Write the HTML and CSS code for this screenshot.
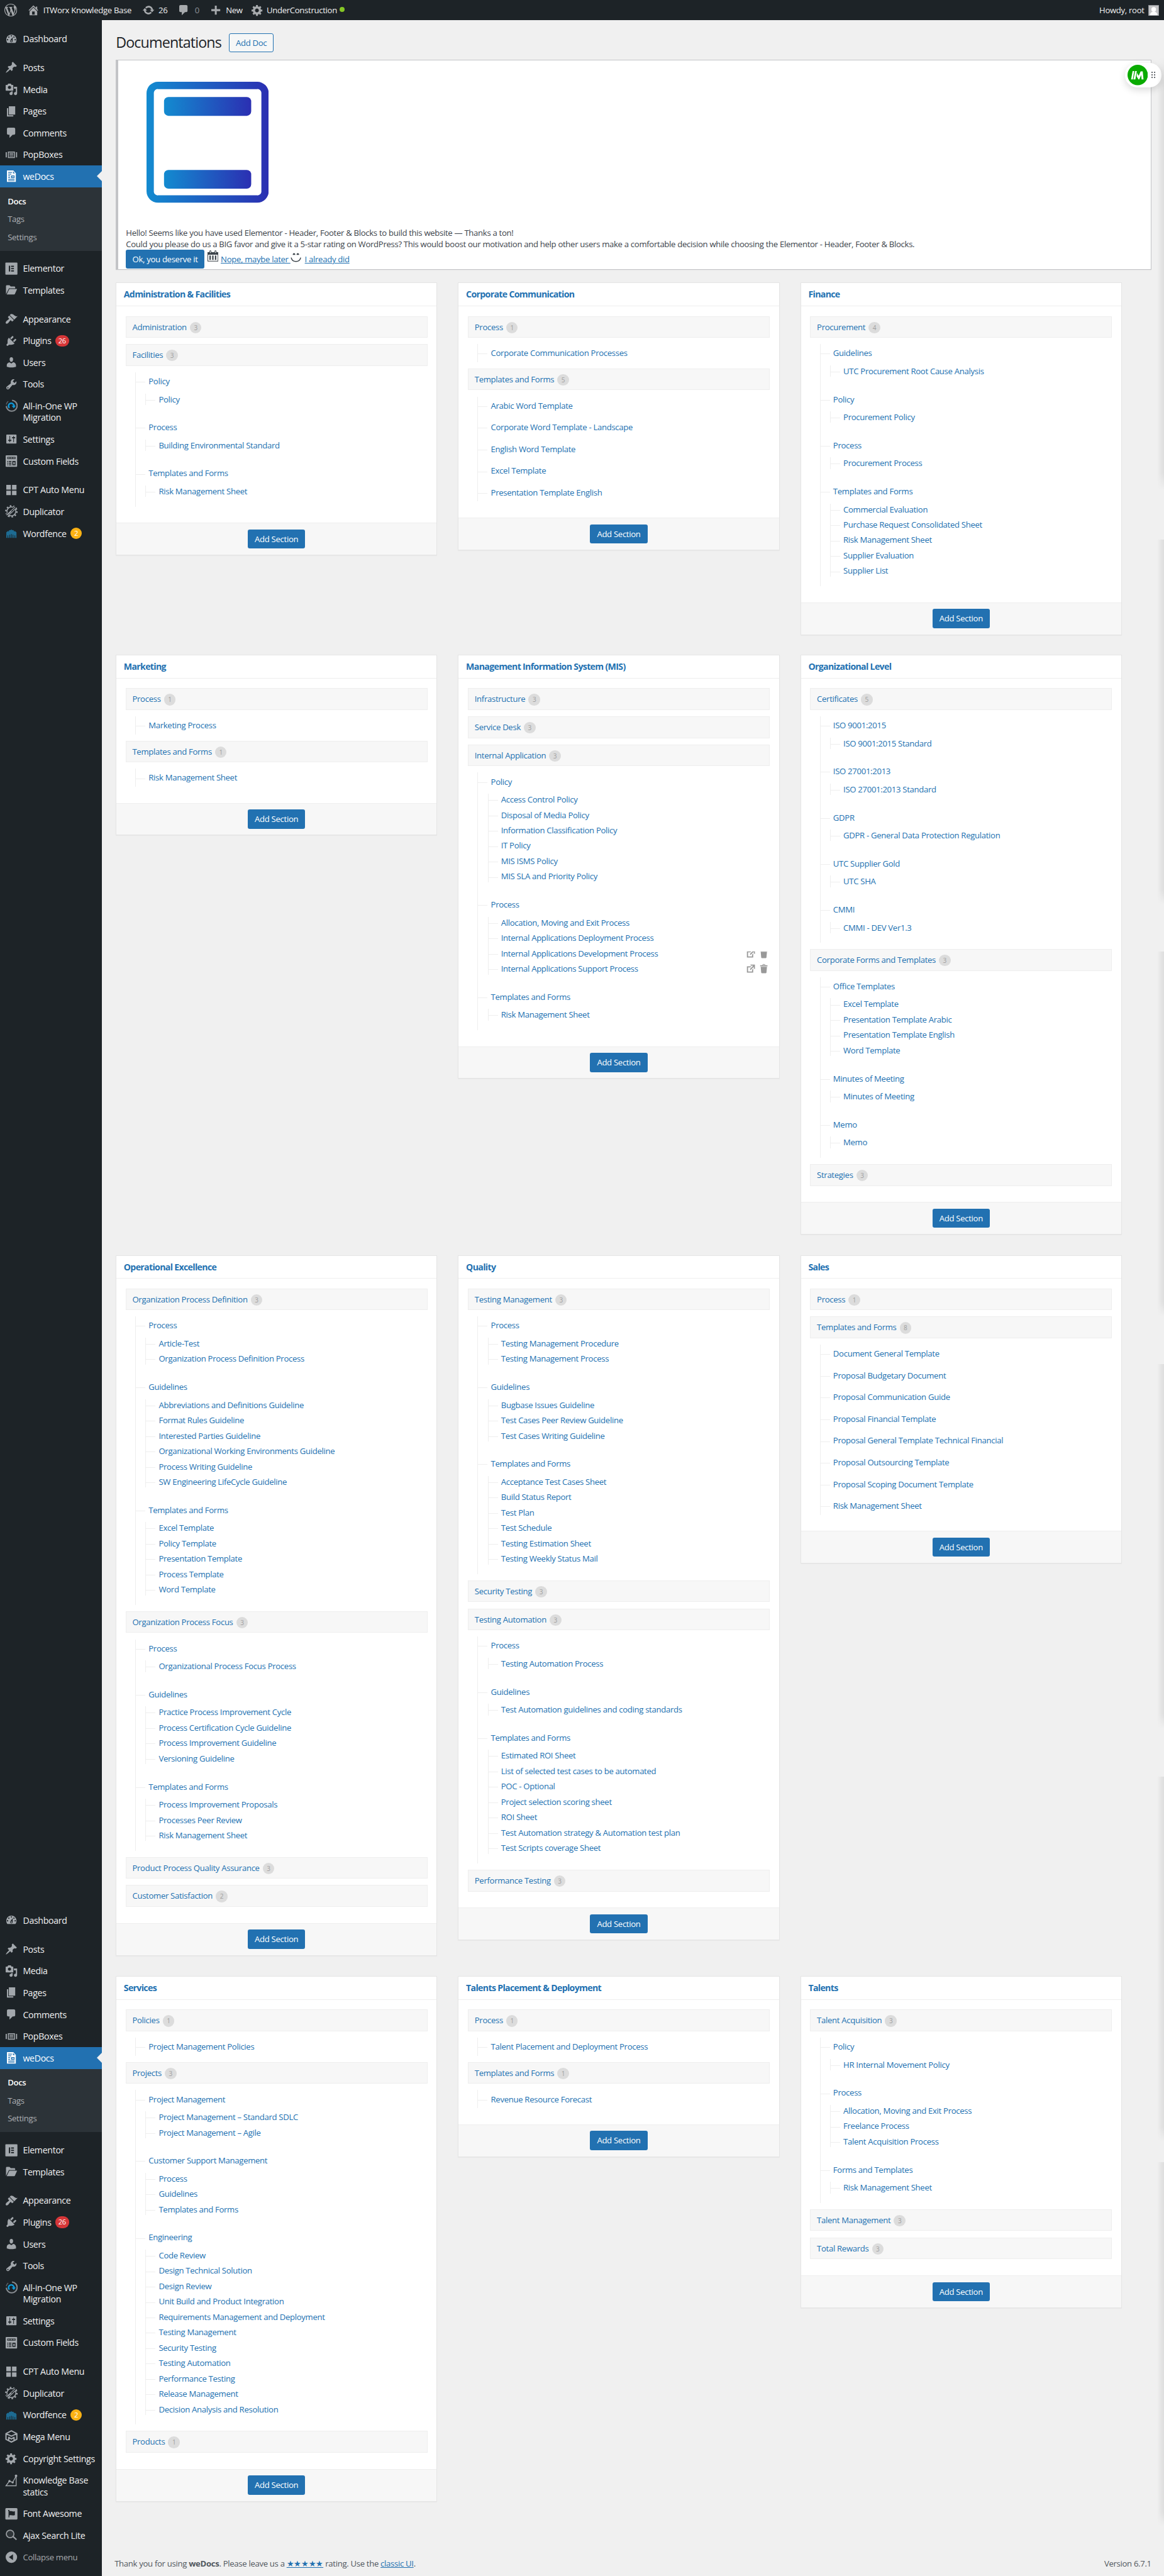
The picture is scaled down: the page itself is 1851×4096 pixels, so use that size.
FILE: index.html
```html
<!DOCTYPE html>
<html lang="en">
<head>
<meta charset="utf-8">
<title>Documentations</title>
<link rel="stylesheet" href="styles.css">
</head>
<body>
<svg class="sprite" width="0" height="0" aria-hidden="true">
  <symbol id="wp" viewBox="0 0 20 20"><path d="M20 10c0-5.51-4.49-10-10-10C4.48 0 0 4.49 0 10c0 5.52 4.48 10 10 10 5.51 0 10-4.48 10-10zM7.78 15.37L4.37 6.22c.55-.02 1.17-.08 1.17-.08.5-.06.44-1.13-.06-1.11 0 0-1.45.11-2.37.11-.18 0-.37 0-.58-.01C4.12 2.69 6.87 1.11 10 1.11c2.33 0 4.45.87 6.05 2.34-.68-.11-1.65.39-1.65 1.58 0 .74.45 1.36.9 2.1.35.61.55 1.36.55 2.46 0 1.49-1.4 5-1.4 5l-3.03-8.37c.54-.02.82-.17.82-.17.5-.05.44-1.25-.06-1.22 0 0-1.44.12-2.38.12-.87 0-2.33-.12-2.33-.12-.5-.03-.56 1.2-.06 1.22l.92.08 1.26 3.41zM17.41 10c.24-.64.74-1.87.43-4.25.7 1.29 1.05 2.71 1.05 4.25 0 3.29-1.73 6.24-4.4 7.78.97-2.59 1.94-5.2 2.92-7.78zM6.1 18.09C3.12 16.65 1.11 13.53 1.11 10c0-1.3.23-2.48.72-3.59C3.25 10.3 4.67 14.2 6.1 18.09zm4.03-6.63l2.58 6.98c-.86.29-1.76.45-2.71.45-.79 0-1.57-.11-2.29-.33.81-2.38 1.62-4.74 2.42-7.1z"/></symbol>
  <symbol id="home" viewBox="0 0 20 20"><path d="M16 8.5l1.53 1.53-1.06 1.06L10 4.6l-6.47 6.49-1.06-1.06L10 2.5l4 4v-2h2v4zm-6-2.46l6 5.99V18H4v-5.97zM12 17v-5H8v5h4z"/></symbol>
  <symbol id="update" viewBox="0 0 20 20"><path d="M10.2 3.28c3.53 0 6.43 2.61 6.92 6h2.08l-3.5 4-3.5-4h2.32c-.45-1.97-2.21-3.45-4.32-3.45-1.45 0-2.73.71-3.54 1.78L4.95 5.66C6.23 4.2 8.11 3.28 10.2 3.28zm-.4 13.44c-3.52 0-6.43-2.61-6.92-6H.8l3.5-4c1.17 1.33 2.33 2.67 3.5 4H5.48c.45 1.97 2.21 3.45 4.32 3.45 1.45 0 2.73-.71 3.54-1.78l1.71 1.95c-1.28 1.46-3.15 2.38-5.25 2.38z"/></symbol>
  <symbol id="comment" viewBox="0 0 20 20"><path d="M5 2h9c1.1 0 2 .9 2 2v7c0 1.1-.9 2-2 2h-2l-5 5v-5H5c-1.1 0-2-.9-2-2V4c0-1.1.9-2 2-2z"/></symbol>
  <symbol id="plus" viewBox="0 0 20 20"><path d="M17 8.500v3h-5.500V17h-3v-5.500H3v-3h5.500V3h3v5.500z"/></symbol>
  <symbol id="dashboard" viewBox="0 0 20 20"><path fill-rule="evenodd" d="M3.76 16h12.48c1.1-1.37 1.76-3.11 1.76-5 0-4.42-3.58-8-8-8s-8 3.58-8 8c0 1.89.66 3.63 1.76 5zM10 4c.55 0 1 .45 1 1s-.45 1-1 1-1-.45-1-1 .45-1 1-1zM6 6c.55 0 1 .45 1 1s-.45 1-1 1-1-.45-1-1 .45-1 1-1zm8 0c.55 0 1 .45 1 1s-.45 1-1 1-1-.45-1-1 .45-1 1-1zm-5.370 5.550L12 7v6c0 1.100-.9 2-2 2s-2-.9-2-2c0-.57.24-1.080.63-1.450zM4 10c.55 0 1 .45 1 1s-.45 1-1 1-1-.45-1-1 .45-1 1-1zm12 0c.55 0 1 .45 1 1s-.45 1-1 1-1-.45-1-1 .45-1 1-1zm-5 3c0-.55-.45-1-1-1s-1 .45-1 1 .45 1 1 1 1-.45 1-1z"/></symbol>
  <symbol id="pin" viewBox="0 0 20 20"><path d="M10.44 3.020l1.820-1.820 6.360 6.350-1.830 1.820c-1.050-.68-2.480-.57-3.410.36l-.75.75c-.92.93-1.040 2.350-.35 3.410l-1.830 1.820-2.410-2.410-2.800 2.790c-.42.42-3.380 2.710-3.800 2.290s1.860-3.390 2.280-3.810l2.790-2.790L4.100 9.360l1.830-1.820c1.050.69 2.480.57 3.400-.36l.75-.75c.93-.92 1.050-2.350.36-3.410z"/></symbol>
  <symbol id="media" viewBox="0 0 20 20"><path fill-rule="evenodd" d="M13 11V4c0-.55-.45-1-1-1h-1.670L9 1H5L3.670 3H2c-.55 0-1 .45-1 1v7c0 .55.45 1 1 1h10c.55 0 1-.45 1-1zM7 4.500c1.380 0 2.500 1.120 2.500 2.500S8.380 9.500 7 9.500 4.500 8.380 4.500 7 5.620 4.500 7 4.500zM14 6h5v10.500c0 1.380-1.120 2.500-2.500 2.500S14 17.880 14 16.500s1.120-2.500 2.500-2.500c.17 0 .34.020.5.050V9h-3V6zm-4 8.050V13h2v3.500c0 1.380-1.120 2.500-2.500 2.500S7 17.880 7 16.500 8.120 14 9.500 14c.17 0 .34.020.5.050z"/></symbol>
  <symbol id="page" viewBox="0 0 20 20"><path d="M6 15V2h10v13H6zm-1 1h8v2H3V5h2v11z"/></symbol>
  <symbol id="popbox" viewBox="0 0 20 20"><path fill-rule="evenodd" d="M4.500 5h11v10h-11zM6 6.500v7h8v-7zM7 7.500h6v1.200H7zM7 9.500h6v1.200H7zM7 11.500h6v1.200H7zM1 6h1.800v8H1zM17.200 6H19v8h-1.800z"/></symbol>
  <symbol id="doc" viewBox="0 0 20 20"><path fill-rule="evenodd" d="M3 1h10l4 4.500V19H3zM5 3.500v1.200h6V3.500zM5 6.300v1.200h5V6.300zM5 9v1.200h3V9zM5 11.700v1.200h3v-1.200zM5 14.300v1.200h10v-1.200zM5 16.600v1h10v-1zM9.500 9v4H15V9zM11 10.300h3v1.400h-3zM12.500 2.300v3.400h3z"/></symbol>
  <symbol id="elementor" viewBox="0 0 20 20"><path fill-rule="evenodd" d="M1.500.5h17a1 1 0 0 1 1 1v17a1 1 0 0 1-1 1h-17a1 1 0 0 1-1-1v-17a1 1 0 0 1 1-1zM6 5.500v9h2v-9zM9.500 5.500v1.800H14V5.500zM9.500 9.100v1.800H14V9.100zM9.500 12.700v1.800H14v-1.800z"/></symbol>
  <symbol id="folder" viewBox="0 0 20 20"><path d="M1.500 16.500V4c0-.8.6-1.500 1.400-1.500H7l2 2h5.500c.8 0 1.500.6 1.500 1.500v1.500H6.200L3 13.800zM2.600 17L6.800 8.500H19L15.600 16c-.3.600-.7 1-1.400 1z"/></symbol>
  <symbol id="brush" viewBox="0 0 20 20"><path d="M14.480 11.060L7.410 3.990l1.500-1.500c.5-.56 2.300-.47 3.510.32 1.210.8 1.430 1.280 2.910 2.100 1.180.64 2.450 1.260 4.450.85zm-.71.71L6.700 4.700 4.930 6.470c-.39.39-.39 1.020 0 1.410l1.060 1.060c.39.39.39 1.030 0 1.420-.6.6-1.430 1.110-2.210 1.690-.35.26-.7.53-1.010.84C1.430 14.230.4 16.080 1.400 17.070c.99 1 2.840-.03 4.180-1.360.31-.31.58-.66.85-1.020.57-.78 1.080-1.610 1.690-2.210.39-.39 1.020-.39 1.410 0l1.060 1.060c.39.39 1.020.39 1.410 0z"/></symbol>
  <symbol id="plug" viewBox="0 0 20 20"><path d="M13.110 4.360L9.870 7.600 8 5.730l3.240-3.240c.35-.34 1.050-.2 1.560.32.52.51.66 1.210.31 1.550zm-8 1.770l.91-1.120 9.010 9.010-1.190.84c-.71.71-2.630 1.160-3.820 1.160H6.140L4.900 17.260c-.59.59-1.540.59-2.120 0-.59-.58-.59-1.530 0-2.120l1.240-1.240v-3.880c0-1.130.4-3.190 1.090-3.890zm7.260 3.970l3.240-3.240c.34-.35 1.040-.21 1.550.31.52.51.66 1.210.31 1.550l-3.240 3.250z"/></symbol>
  <symbol id="user" viewBox="0 0 20 20"><path d="M10 9.250c-2.270 0-2.730-3.440-2.730-3.440C7 4.020 7.820 2 9.970 2c2.160 0 2.980 2.020 2.710 3.810 0 0-.41 3.440-2.680 3.440zm0 2.570L12.720 10c2.390 0 4.520 2.330 4.520 4.530v2.490s-3.650 1.130-7.240 1.130c-3.650 0-7.240-1.130-7.240-1.130v-2.490c0-2.250 1.940-4.480 4.470-4.480z"/></symbol>
  <symbol id="wrench" viewBox="0 0 20 20"><path fill-rule="evenodd" d="M16.680 9.770c-1.340 1.340-3.300 1.670-4.950.99l-5.410 6.520c-.99.99-2.590.99-3.580 0s-.99-2.590 0-3.570l6.520-5.420c-.68-1.650-.35-3.610.99-4.950 1.280-1.280 3.120-1.620 4.720-1.060l-2.890 2.890 2.820 2.820 2.860-2.870c.53 1.580.18 3.390-1.080 4.650zM3.810 16.210c.4.39 1.040.39 1.430 0 .4-.4.4-1.040 0-1.430-.39-.4-1.030-.4-1.430 0-.39.39-.39 1.030 0 1.430z"/></symbol>
  <symbol id="migrate" viewBox="0 0 20 20"><g fill="none"><path d="M11 1.500a8.500 8.500 0 1 1-9 9" stroke="#868b90" stroke-width="2"/><path d="M2 8a8.500 8.500 0 0 1 3-5" stroke="#5c6268" stroke-width="1.500"/><path d="M6.800 13.500a4.300 4.300 0 1 1 7.200-2.500" stroke="#0f9bdc" stroke-width="2.400"/></g><path d="M10.500 10.200h6.500l-3.200 3.800z" fill="#0f9bdc"/></symbol>
  <symbol id="sliders" viewBox="0 0 20 20"><path fill-rule="evenodd" d="M18 16V4c0-.55-.45-1-1-1H3c-.55 0-1 .45-1 1v12c0 .55.45 1 1 1h14c.55 0 1-.45 1-1zM8 11h1c.55 0 1 .45 1 1s-.45 1-1 1H8v1.500c0 .28-.22.5-.5.5s-.5-.22-.5-.5V13H6c-.55 0-1-.45-1-1s.45-1 1-1h1V5.500c0-.28.22-.5.5-.5s.5.22.5.5V11zm5-2h-1c-.55 0-1-.45-1-1s.45-1 1-1h1V5.500c0-.28.22-.5.5-.5s.5.22.5.5V7h1c.55 0 1 .45 1 1s-.45 1-1 1h-1v5.500c0 .28-.22.5-.5.5s-.5-.22-.5-.5V9z"/></symbol>
  <symbol id="fields" viewBox="0 0 20 20"><path fill-rule="evenodd" d="M2 1h16a1 1 0 0 1 1 1v16a1 1 0 0 1-1 1H2a1 1 0 0 1-1-1V2a1 1 0 0 1 1-1zM3.500 3.500v3.200h13V3.500zM3.500 10v1.300H5V10zM6 10v1.300h4V10zM3.500 12.700V14H5v-1.300zM6 12.700V14h4v-1.300zM3.500 15.300v1.300H5v-1.300zM6 15.300v1.300h4v-1.300zM11.500 10v6.500h5V10zM13 11.500h2.200V15H13zM4.500 4.500h2.800v1.200H4.500zM8.500 4.500h2.900v1.200H8.500zM12.600 4.500h2.800v1.200h-2.800z"/></symbol>
  <symbol id="grid" viewBox="0 0 20 20"><path d="M2 2h7.200v7.300H2zM11 2h7v7.300h-7zM2 11h7.200v7H2zM11 11h7v7h-7z"/></symbol>
  <symbol id="duplicator" viewBox="0 0 20 20"><g fill="none" stroke="currentColor"><circle cx="10" cy="10" r="7" stroke-width="1.500"/><circle cx="10" cy="10" r="8.700" stroke-width="2.200" stroke-dasharray="2.400 3.066"/></g><path d="M1.500 17.500L17.500 2.300" stroke="#1d2327" stroke-width="4.500"/><path d="M2 16L16 3M4 18L18.500 4M4 15.500L10 10M10.500 12L15 7" stroke="currentColor" stroke-width="1.100"/></symbol>
  <symbol id="fence" viewBox="0 0 20 20"><path fill="#1d6b92" d="M2 8.500L4.200 6.500 6 7V5.500L8 4.600 9 5l1-1.500L11 5l1-.4 2 .9V7l1.800-.5L18 8.500V17h-2v-4h-1v4h-2v-5h-1v5h-1.500v-6h-1v6H8v-5H7v5H5v-4H4v4H2z"/></symbol>
  <symbol id="mega" viewBox="0 0 20 20"><path fill="none" stroke="currentColor" stroke-width="2" stroke-linejoin="round" d="M10 1.200L18.500 5.500v9L10 18.800 1.500 14.500v-9zM1.500 5.500L10 9.500l8.500-4M5.800 15.500v-4L10 14l4.200-2.500v4"/></symbol>
  <symbol id="gear" viewBox="0 0 20 20"><path fill-rule="evenodd" d="M18 12h-2.180c-.17.7-.44 1.350-.81 1.930l1.540 1.540-2.100 2.100-1.540-1.540c-.58.36-1.230.63-1.910.79V19H8v-2.180c-.68-.16-1.330-.43-1.910-.79l-1.540 1.540-2.120-2.120 1.540-1.540c-.36-.58-.63-1.230-.79-1.910H1V9.030h2.170c.16-.7.44-1.350.8-1.940L2.430 5.550l2.100-2.100 1.540 1.540c.58-.37 1.240-.64 1.930-.81V2h3v2.180c.68.16 1.330.43 1.910.79l1.540-1.540 2.120 2.120-1.540 1.540c.36.59.64 1.240.8 1.940H18V12zm-8.500 1.500c1.660 0 3-1.340 3-3s-1.340-3-3-3-3 1.340-3 3 1.340 3 3 3z"/></symbol>
  <symbol id="chart" viewBox="0 0 20 20"><path fill="none" stroke="currentColor" stroke-width="1.300" d="M1.500 18.300L7 11l5 2 5.500-10v15.300z"/><circle cx="7" cy="11" r="1.800"/><circle cx="12" cy="13" r="1.600"/><circle cx="17.300" cy="2.800" r="2"/></symbol>
  <symbol id="flag" viewBox="0 0 20 20"><path fill-rule="evenodd" d="M2 1h16a1.500 1.500 0 0 1 1.500 1.500v15A1.500 1.500 0 0 1 18 19H2a1.500 1.500 0 0 1-1.500-1.500v-15A1.500 1.500 0 0 1 2 1zM5 4v1.500l.5.5v9.500h1.300v-3c3-1.300 5 1 8.700-.3V6c-3.700 1.200-5.500-1-8.500 0V4z"/></symbol>
  <symbol id="search" viewBox="0 0 20 20"><circle cx="8" cy="8" r="6" fill="#2f3539" stroke="#9a9ea2" stroke-width="1.700"/><path d="M12.500 12L18 17" stroke="#9a9ea2" stroke-width="2.200"/></symbol>
  <symbol id="collapse" viewBox="0 0 20 20"><path fill-rule="evenodd" d="M10 1a9 9 0 1 1 0 18 9 9 0 0 1 0-18zM12.500 5.500L6 10l6.500 4.500z"/></symbol>
  <symbol id="external" viewBox="0 0 20 20"><path d="M9 3h8v8l-2-1V6.920l-5.600 5.590-1.410-1.410L14.080 5H10zm3 12v-3l2-2v7H3V6h8L9 8H5v7h7z"/></symbol>
  <symbol id="trash" viewBox="0 0 20 20"><path d="M12 4h3c.6 0 1 .4 1 1v1H3V5c0-.6.500-1 1-1h3c.2-1.100 1.300-2 2.500-2s2.300.9 2.500 2zM8 4h3c-.2-.6-.9-1-1.500-1S8.200 3.400 8 4zM4 7h11l-.9 10.100c0 .5-.5.9-1 .9H5.900c-.5 0-.9-.4-1-.9z"/></symbol>
</svg>

<header class="bar">
  <span class="bar-item w-logo"><svg class="ico"><use href="#wp"/></svg></span>
  <span class="bar-item w-site"><svg class="ico"><use href="#home"/></svg>ITWorx Knowledge Base</span>
  <span class="bar-item w-upd"><svg class="ico"><use href="#update"/></svg>26</span>
  <span class="bar-item w-com dim"><svg class="ico"><use href="#comment"/></svg>0</span>
  <span class="bar-item w-new"><svg class="ico"><use href="#plus"/></svg>New</span>
  <span class="bar-item w-uc"><svg class="ico"><use href="#gear"/></svg>UnderConstruction<i class="dot"></i></span>
  <span class="bar-user">Howdy, root<svg class="avatar" viewBox="0 0 17 17"><path fill="#c3c4c6" d="M0 0h17v17H0z"/><circle cx="8.500" cy="7" r="3.700" fill="#fff"/><path fill="#fff" d="M2.300 17c.5-4.500 3-6.800 6.200-6.800s5.700 2.300 6.200 6.800z"/><path fill="none" stroke="#8c8f94" d="M.5.5h16v16H.5z"/></svg></span>
</header>

<div class="shell">
<nav class="side">
  <ul class="menu menu-top">
    <li><svg class="ico"><use href="#dashboard"/></svg><span>Dashboard</span></li>
    <li class="gap"><svg class="ico"><use href="#pin"/></svg><span>Posts</span></li>
    <li><svg class="ico"><use href="#media"/></svg><span>Media</span></li>
    <li><svg class="ico"><use href="#page"/></svg><span>Pages</span></li>
    <li><svg class="ico"><use href="#comment"/></svg><span>Comments</span></li>
    <li><svg class="ico"><use href="#popbox"/></svg><span>PopBoxes</span></li>
    <li class="on"><svg class="ico"><use href="#doc"/></svg><span>weDocs</span></li>
    <li class="sub"><b>Docs</b><span>Tags</span><span>Settings</span></li>
    <li class="gap"><svg class="ico"><use href="#elementor"/></svg><span>Elementor</span></li>
    <li><svg class="ico"><use href="#folder"/></svg><span>Templates</span></li>
    <li class="gap"><svg class="ico"><use href="#brush"/></svg><span>Appearance</span></li>
    <li><svg class="ico"><use href="#plug"/></svg><span>Plugins</span><em class="red">26</em></li>
    <li><svg class="ico"><use href="#user"/></svg><span>Users</span></li>
    <li><svg class="ico"><use href="#wrench"/></svg><span>Tools</span></li>
    <li><svg class="ico"><use href="#migrate"/></svg><span>All-in-One WP<br>Migration</span></li>
    <li><svg class="ico"><use href="#sliders"/></svg><span>Settings</span></li>
    <li><svg class="ico"><use href="#fields"/></svg><span>Custom Fields</span></li>
    <li class="gap"><svg class="ico"><use href="#grid"/></svg><span>CPT Auto Menu</span></li>
    <li><svg class="ico"><use href="#duplicator"/></svg><span>Duplicator</span></li>
    <li><svg class="ico"><use href="#fence"/></svg><span>Wordfence</span><em>2</em></li>
  </ul>
  <ul class="menu">
    <li><svg class="ico"><use href="#dashboard"/></svg><span>Dashboard</span></li>
    <li class="gap"><svg class="ico"><use href="#pin"/></svg><span>Posts</span></li>
    <li><svg class="ico"><use href="#media"/></svg><span>Media</span></li>
    <li><svg class="ico"><use href="#page"/></svg><span>Pages</span></li>
    <li><svg class="ico"><use href="#comment"/></svg><span>Comments</span></li>
    <li><svg class="ico"><use href="#popbox"/></svg><span>PopBoxes</span></li>
    <li class="on"><svg class="ico"><use href="#doc"/></svg><span>weDocs</span></li>
    <li class="sub"><b>Docs</b><span>Tags</span><span>Settings</span></li>
    <li class="gap"><svg class="ico"><use href="#elementor"/></svg><span>Elementor</span></li>
    <li><svg class="ico"><use href="#folder"/></svg><span>Templates</span></li>
    <li class="gap"><svg class="ico"><use href="#brush"/></svg><span>Appearance</span></li>
    <li><svg class="ico"><use href="#plug"/></svg><span>Plugins</span><em class="red">26</em></li>
    <li><svg class="ico"><use href="#user"/></svg><span>Users</span></li>
    <li><svg class="ico"><use href="#wrench"/></svg><span>Tools</span></li>
    <li><svg class="ico"><use href="#migrate"/></svg><span>All-in-One WP<br>Migration</span></li>
    <li><svg class="ico"><use href="#sliders"/></svg><span>Settings</span></li>
    <li><svg class="ico"><use href="#fields"/></svg><span>Custom Fields</span></li>
    <li class="gap"><svg class="ico"><use href="#grid"/></svg><span>CPT Auto Menu</span></li>
    <li><svg class="ico"><use href="#duplicator"/></svg><span>Duplicator</span></li>
    <li><svg class="ico"><use href="#fence"/></svg><span>Wordfence</span><em>2</em></li>
    <li><svg class="ico"><use href="#mega"/></svg><span>Mega Menu</span></li>
    <li><svg class="ico"><use href="#gear"/></svg><span>Copyright Settings</span></li>
    <li><svg class="ico"><use href="#chart"/></svg><span>Knowledge Base<br>statics</span></li>
    <li><svg class="ico"><use href="#flag"/></svg><span>Font Awesome</span></li>
    <li><svg class="ico"><use href="#search"/></svg><span>Ajax Search Lite</span></li>
    <li class="fold"><svg class="ico"><use href="#collapse"/></svg><span>Collapse menu</span></li>
  </ul>
</nav>

<main class="main">
  <div class="head"><h1>Documentations</h1><a class="add-doc">Add Doc</a></div>

  <section class="notice">
    <svg class="logo" viewBox="0 0 192 190">
      <defs><linearGradient id="blue"><stop offset="0" stop-color="#138bd0"/><stop offset="1" stop-color="#2b2fb2"/></linearGradient></defs>
      <path fill="url(#blue)" fill-rule="evenodd" d="M18 0h156a18 18 0 0 1 18 18v154a18 18 0 0 1-18 18H18a18 18 0 0 1-18-18V18A18 18 0 0 1 18 0zM18 11.500a6 6 0 0 0-6.500 6.500v154a6 6 0 0 0 6.500 6.500h156a6 6 0 0 0 6.500-6.500V18a6 6 0 0 0-6.500-6.500z"/>
      <rect x="27.500" y="24" width="137" height="29.500" rx="7" fill="url(#blue)"/>
      <rect x="27.500" y="138.500" width="137" height="29.500" rx="7" fill="url(#blue)"/>
    </svg>
    <p>Hello! Seems like you have used Elementor - Header, Footer &amp; Blocks to build this website — Thanks a ton!<br>Could you please do us a BIG favor and give it a 5-star rating on WordPress? This would boost our motivation and help other users make a comfortable decision while choosing the Elementor - Header, Footer &amp; Blocks.</p>
    <div class="actions">
      <a class="btn ok">Ok, you deserve it</a>
      <svg class="cal" viewBox="0 0 17 18"><path fill-rule="evenodd" d="M0 3h3V1.500a1.500 1.500 0 0 1 3 0V3h5V1.500a1.500 1.500 0 0 1 3 0V3h3v14.500H0zM1 7v9.500h15V7zM4 1.300v3h1v-3zM12 1.300v3h1v-3zM3 8.200h2.200v7H3zM7.300 8.200h2.200v7H7.300zM11.600 8.200h2.200v7h-2.200z"/></svg>
      <a class="link later">Nope, maybe later&nbsp;</a>
      <svg class="smile" viewBox="0 0 17 15"><path d="M3.500 3.300C3.500 1.300 4.300.5 5.500.5s2 .8 2 2.800zM9.500 3.300c0-2 .8-2.800 2-2.800s2 .8 2 2.800z"/><path fill="none" stroke="currentColor" stroke-width="1.500" d="M1 7.500C3 15.700 14 15.700 16 7.500"/></svg>
      <a class="link">I already did</a>
    </div>
  </section>

  <div class="docs">
    <article class="card">
      <h3>Administration &amp; Facilities</h3>
      <div class="body">
        <div class="sec">Administration<i>3</i></div>
        <div class="sec">Facilities<i>3</i></div>
        <ul class="tree">
          <li>Policy<ul><li>Policy</li></ul></li>
          <li>Process<ul><li>Building Environmental Standard</li></ul></li>
          <li>Templates and Forms<ul><li>Risk Management Sheet</li></ul></li>
        </ul>
      </div>
      <footer><a class="btn">Add Section</a></footer>
    </article>

    <article class="card">
      <h3>Corporate Communication</h3>
      <div class="body">
        <div class="sec">Process<i>1</i></div>
        <ul class="tree"><li>Corporate Communication Processes</li></ul>
        <div class="sec">Templates and Forms<i>5</i></div>
        <ul class="tree">
          <li>Arabic Word Template</li>
          <li>Corporate Word Template - Landscape</li>
          <li>English Word Template</li>
          <li>Excel Template</li>
          <li>Presentation Template English</li>
        </ul>
      </div>
      <footer><a class="btn">Add Section</a></footer>
    </article>

    <article class="card">
      <h3>Finance</h3>
      <div class="body">
        <div class="sec">Procurement<i>4</i></div>
        <ul class="tree">
          <li>Guidelines<ul><li>UTC Procurement Root Cause Analysis</li></ul></li>
          <li>Policy<ul><li>Procurement Policy</li></ul></li>
          <li>Process<ul><li>Procurement Process</li></ul></li>
          <li>Templates and Forms<ul>
            <li>Commercial Evaluation</li>
            <li>Purchase Request Consolidated Sheet</li>
            <li>Risk Management Sheet</li>
            <li>Supplier Evaluation</li>
            <li>Supplier List</li></ul></li>
        </ul>
      </div>
      <footer><a class="btn">Add Section</a></footer>
    </article>

    <article class="card">
      <h3>Marketing</h3>
      <div class="body">
        <div class="sec">Process<i>1</i></div>
        <ul class="tree"><li>Marketing Process</li></ul>
        <div class="sec">Templates and Forms<i>1</i></div>
        <ul class="tree"><li>Risk Management Sheet</li></ul>
      </div>
      <footer><a class="btn">Add Section</a></footer>
    </article>

    <article class="card">
      <h3>Management Information System (MIS)</h3>
      <div class="body">
        <div class="sec">Infrastructure<i>3</i></div>
        <div class="sec">Service Desk<i>3</i></div>
        <div class="sec">Internal Application<i>3</i></div>
        <ul class="tree">
          <li>Policy<ul>
            <li>Access Control Policy</li>
            <li>Disposal of Media Policy</li>
            <li>Information Classification Policy</li>
            <li>IT Policy</li>
            <li>MIS ISMS Policy</li>
            <li>MIS SLA and Priority Policy</li></ul></li>
          <li>Process<ul>
            <li>Allocation, Moving and Exit Process</li>
            <li>Internal Applications Deployment Process</li>
            <li class="tools">Internal Applications Development Process<span class="acts cut"><svg><use href="#external"/></svg><svg><use href="#trash"/></svg></span></li>
            <li class="tools">Internal Applications Support Process<span class="acts"><svg><use href="#external"/></svg><svg><use href="#trash"/></svg></span></li></ul></li>
          <li>Templates and Forms<ul><li>Risk Management Sheet</li></ul></li>
        </ul>
      </div>
      <footer><a class="btn">Add Section</a></footer>
    </article>

    <article class="card">
      <h3>Organizational Level</h3>
      <div class="body">
        <div class="sec">Certificates<i>5</i></div>
        <ul class="tree">
          <li>ISO 9001:2015<ul><li>ISO 9001:2015 Standard</li></ul></li>
          <li>ISO 27001:2013<ul><li>ISO 27001:2013 Standard</li></ul></li>
          <li>GDPR<ul><li>GDPR - General Data Protection Regulation</li></ul></li>
          <li>UTC Supplier Gold<ul><li>UTC SHA</li></ul></li>
          <li>CMMI<ul><li>CMMI - DEV Ver1.3</li></ul></li>
        </ul>
        <div class="sec">Corporate Forms and Templates<i>3</i></div>
        <ul class="tree">
          <li>Office Templates<ul>
            <li>Excel Template</li>
            <li>Presentation Template Arabic</li>
            <li>Presentation Template English</li>
            <li>Word Template</li></ul></li>
          <li>Minutes of Meeting<ul><li>Minutes of Meeting</li></ul></li>
          <li>Memo<ul><li>Memo</li></ul></li>
        </ul>
        <div class="sec">Strategies<i>3</i></div>
      </div>
      <footer><a class="btn">Add Section</a></footer>
    </article>

    <article class="card">
      <h3>Operational Excellence</h3>
      <div class="body">
        <div class="sec">Organization Process Definition<i>3</i></div>
        <ul class="tree">
          <li>Process<ul>
            <li>Article-Test</li>
            <li>Organization Process Definition Process</li></ul></li>
          <li>Guidelines<ul>
            <li>Abbreviations and Definitions Guideline</li>
            <li>Format Rules Guideline</li>
            <li>Interested Parties Guideline</li>
            <li>Organizational Working Environments Guideline</li>
            <li>Process Writing Guideline</li>
            <li>SW Engineering LifeCycle Guideline</li></ul></li>
          <li>Templates and Forms<ul>
            <li>Excel Template</li>
            <li>Policy Template</li>
            <li>Presentation Template</li>
            <li>Process Template</li>
            <li>Word Template</li></ul></li>
        </ul>
        <div class="sec">Organization Process Focus<i>3</i></div>
        <ul class="tree">
          <li>Process<ul><li>Organizational Process Focus Process</li></ul></li>
          <li>Guidelines<ul>
            <li>Practice Process Improvement Cycle</li>
            <li>Process Certification Cycle Guideline</li>
            <li>Process Improvement Guideline</li>
            <li>Versioning Guideline</li></ul></li>
          <li>Templates and Forms<ul>
            <li>Process Improvement Proposals</li>
            <li>Processes Peer Review</li>
            <li>Risk Management Sheet</li></ul></li>
        </ul>
        <div class="sec">Product Process Quality Assurance<i>3</i></div>
        <div class="sec">Customer Satisfaction<i>2</i></div>
      </div>
      <footer><a class="btn">Add Section</a></footer>
    </article>

    <article class="card">
      <h3>Quality</h3>
      <div class="body">
        <div class="sec">Testing Management<i>3</i></div>
        <ul class="tree">
          <li>Process<ul>
            <li>Testing Management Procedure</li>
            <li>Testing Management Process</li></ul></li>
          <li>Guidelines<ul>
            <li>Bugbase Issues Guideline</li>
            <li>Test Cases Peer Review Guideline</li>
            <li>Test Cases Writing Guideline</li></ul></li>
          <li>Templates and Forms<ul>
            <li>Acceptance Test Cases Sheet</li>
            <li>Build Status Report</li>
            <li>Test Plan</li>
            <li>Test Schedule</li>
            <li>Testing Estimation Sheet</li>
            <li>Testing Weekly Status Mail</li></ul></li>
        </ul>
        <div class="sec">Security Testing<i>3</i></div>
        <div class="sec">Testing Automation<i>3</i></div>
        <ul class="tree">
          <li>Process<ul><li>Testing Automation Process</li></ul></li>
          <li>Guidelines<ul><li>Test Automation guidelines and coding standards</li></ul></li>
          <li>Templates and Forms<ul>
            <li>Estimated ROI Sheet</li>
            <li>List of selected test cases to be automated</li>
            <li>POC - Optional</li>
            <li>Project selection scoring sheet</li>
            <li>ROI Sheet</li>
            <li>Test Automation strategy &amp; Automation test plan</li>
            <li>Test Scripts coverage Sheet</li></ul></li>
        </ul>
        <div class="sec">Performance Testing<i>3</i></div>
      </div>
      <footer><a class="btn">Add Section</a></footer>
    </article>

    <article class="card">
      <h3>Sales</h3>
      <div class="body">
        <div class="sec">Process<i>1</i></div>
        <div class="sec">Templates and Forms<i>8</i></div>
        <ul class="tree">
          <li>Document General Template</li>
          <li>Proposal Budgetary Document</li>
          <li>Proposal Communication Guide</li>
          <li>Proposal Financial Template</li>
          <li>Proposal General Template Technical Financial</li>
          <li>Proposal Outsourcing Template</li>
          <li>Proposal Scoping Document Template</li>
          <li>Risk Management Sheet</li>
        </ul>
      </div>
      <footer><a class="btn">Add Section</a></footer>
    </article>

    <article class="card">
      <h3>Services</h3>
      <div class="body">
        <div class="sec">Policies<i>1</i></div>
        <ul class="tree"><li>Project Management Policies</li></ul>
        <div class="sec">Projects<i>3</i></div>
        <ul class="tree">
          <li>Project Management<ul>
            <li>Project Management – Standard SDLC</li>
            <li>Project Management – Agile</li></ul></li>
          <li>Customer Support Management<ul>
            <li>Process</li>
            <li>Guidelines</li>
            <li>Templates and Forms</li></ul></li>
          <li>Engineering<ul>
            <li>Code Review</li>
            <li>Design Technical Solution</li>
            <li>Design Review</li>
            <li>Unit Build and Product Integration</li>
            <li>Requirements Management and Deployment</li>
            <li>Testing Management</li>
            <li>Security Testing</li>
            <li>Testing Automation</li>
            <li>Performance Testing</li>
            <li>Release Management</li>
            <li>Decision Analysis and Resolution</li></ul></li>
        </ul>
        <div class="sec">Products<i>1</i></div>
      </div>
      <footer><a class="btn">Add Section</a></footer>
    </article>

    <article class="card">
      <h3>Talents Placement &amp; Deployment</h3>
      <div class="body">
        <div class="sec">Process<i>1</i></div>
        <ul class="tree"><li>Talent Placement and Deployment Process</li></ul>
        <div class="sec">Templates and Forms<i>1</i></div>
        <ul class="tree"><li>Revenue Resource Forecast</li></ul>
      </div>
      <footer><a class="btn">Add Section</a></footer>
    </article>

    <article class="card">
      <h3>Talents</h3>
      <div class="body">
        <div class="sec">Talent Acquisition<i>3</i></div>
        <ul class="tree">
          <li>Policy<ul><li>HR Internal Movement Policy</li></ul></li>
          <li>Process<ul>
            <li>Allocation, Moving and Exit Process</li>
            <li>Freelance Process</li>
            <li>Talent Acquisition Process</li></ul></li>
          <li>Forms and Templates<ul><li>Risk Management Sheet</li></ul></li>
        </ul>
        <div class="sec">Talent Management<i>3</i></div>
        <div class="sec">Total Rewards<i>3</i></div>
      </div>
      <footer><a class="btn">Add Section</a></footer>
    </article>
  </div>

  <div class="foot">
    <span>Thank you for using <b>weDocs</b>. Please leave us a <a class="link">★★★★★</a> rating. Use the <a class="link">classic UI</a>.</span>
    <span>Version 6.7.1</span>
  </div>
</main>
</div>

<div class="float">
  <svg class="badge" viewBox="0 0 32 32"><circle cx="16" cy="16" r="16" fill="#0aab00"/><path fill="#fff" d="M8 9.800h2.600L8.300 22.900H5.600zM12 9.800h2.600l-2.300 13.100H9.300zM14.700 12.700l2.900 4.600 3-7h3.300l1.200 12.600h-3l-.6-6.800-3 6.800h-1.300l-2.800-4.600z"/></svg>
  <svg class="grip" viewBox="0 0 8 12"><g fill="#4a4f55"><circle cx="2" cy="2" r="1.100"/><circle cx="6" cy="2" r="1.100"/><circle cx="2" cy="6" r="1.100"/><circle cx="6" cy="6" r="1.100"/><circle cx="2" cy="10" r="1.100"/><circle cx="6" cy="10" r="1.100"/></g></svg>
</div>
<div class="edge"><i class="e1"></i><i class="e2"></i><i class="e3"></i><i class="e4"></i><i class="e5"></i><i class="e6"></i></div>
</body>
</html>
```
FILE: styles.css
```css
html { zoom: 1.01195; }
body {
  margin: 0;
  position: relative;
  height: 4047.6px;
  overflow: hidden;
  background: #f0f0f0;
  color: #3c434a;
  font: 13px/1.4 "Open Sans", "Noto Sans", sans-serif;
  letter-spacing: -0.024em;
}
ul { list-style: none; margin: 0; padding: 0; }
.sprite { display: none; }
.ico { width: 20px; height: 20px; fill: currentColor; flex: none; }
.link { color: #2271b1; text-decoration: underline; }

/* top bar */
.bar {
  display: flex;
  height: 32px;
  background: #1d2327;
  color: #f0f0f1;
  font-size: 13px;
}
.bar-item { display: flex; align-items: center; gap: 6px; box-sizing: border-box; white-space: nowrap; }
.bar-item .ico { color: #a7aaad; }
.w-logo { width: 42px; padding-left: 7px; }
.w-site { width: 181px; }
.w-upd { width: 56px; }
.w-com { width: 50px; gap: 7px; }
.w-new { width: 65px; }
.w-uc { gap: 5px; }
.dim { color: #8c9196; }
.dot { width: 8px; height: 8px; border-radius: 50%; background: #85c725; margin: -3px 0 0 -1px; }
.bar-user { display: flex; align-items: center; gap: 6px; margin-left: auto; padding-right: 8px; }
.avatar { width: 17px; height: 17px; }

.shell { display: flex; height: 4015.6px; }

/* side menu */
.side { width: 160px; flex: none; background: #1d2327; }
.menu-top { box-sizing: border-box; height: 2968.500px; padding-top: 12px; }
.menu li { display: flex; padding-left: 8px; color: #f0f0f1; font-size: 14px; line-height: 18.200px; }
.menu li > span { padding: 8.600px 0 7.400px 8px; white-space: nowrap; }
.menu .ico { margin-top: 7px; color: #a2a7ac; }
.menu .gap { margin-top: 11px; }
.menu em {
  margin: 8px 0 0 6px;
  min-width: 18px;
  height: 18px;
  box-sizing: border-box;
  border-radius: 9px;
  background: #fcb214;
  color: #fff;
  font-size: 11px;
  font-style: normal;
  line-height: 17px;
  text-align: center;
}
.menu .red { background: #d63638; padding: 0 5px; }
.menu .on { background: #2271b1; color: #fff; }
.menu .on .ico { color: #fff; }
.menu .on::after {
  content: "";
  align-self: flex-start;
  margin: 9px 0 0 auto;
  border: 8px solid transparent;
  border-left: 0;
  border-right-color: #f0f0f0;
}
.menu .sub {
  flex-direction: column;
  background: #2c3338;
  padding: 7.600px 0 7.400px 12px;
  font-size: 13px;
  color: #adb0b4;
}
.menu .sub > span, .menu .sub > b { padding: 5px 0; }
.menu .sub b { color: #fff; font-weight: 600; }
.menu .fold { color: #a7aaad; font-size: 13px; }

/* content */
.main { flex: 1; padding: 20px 20px 0 22px; min-width: 0; }
.head { display: flex; gap: 10px; height: 42.300px; }
.head h1 {
  margin: 0;
  width: 168px;
  color: #1d2327;
  font-size: 23px;
  font-weight: 400;
  line-height: 29px;
  letter-spacing: -0.037em;
  white-space: nowrap;
}
.add-doc {
  height: 30px;
  width: 70px;
  box-sizing: border-box;
  border: 1px solid #2271b1;
  border-radius: 3px;
  background: #f6f7f7;
  color: #2271b1;
  line-height: 29px;
  text-align: center;
}
.btn {
  display: block;
  width: 90px;
  height: 30px;
  border-radius: 3px;
  background: #2271b1;
  color: #fff;
  line-height: 30.500px;
  text-align: center;
}
.notice {
  box-sizing: border-box;
  height: 329.500px;
  border: 1px solid #c3c4c7;
  border-left-width: 4px;
  background: #fff;
  box-shadow: 0 1px 1px rgba(0, 0, 0, .04);
  padding: 33.500px 12px 0;
}
.logo { display: block; width: 192px; height: 190px; margin-left: 32px; }
.notice p { margin: 37.500px 0 0; white-space: nowrap; }
.actions { display: flex; }
.actions .ok { width: 123px; height: 29.500px; }
.cal { width: 17px; height: 18px; margin: 1px 4px 0 5px; fill: #3c434a; }
.smile { width: 17px; height: 15px; margin: 5px 5px 0 2px; color: #3c434a; fill: currentColor; }
.actions .link { line-height: 30.500px; }
.later { width: 108px; white-space: nowrap; }

.docs {
  display: grid;
  grid-template-columns: repeat(3, 505px);
  grid-template-rows: 584.800px 943px 1133.300px 824px;
  column-gap: 32.900px;
  align-items: start;
  margin-top: 20.400px;
}
.card {
  box-sizing: border-box;
  border: 1px solid #e5e5e5;
  background: #fff;
  box-shadow: 0 1px 1px rgba(0, 0, 0, .04);
  color: #2271b1;
}
.card h3 {
  margin: 0;
  height: 35px;
  padding-left: 11.500px;
  border-bottom: 1px solid #eee;
  font-size: 14px;
  font-weight: 700;
  line-height: 35.500px;
  letter-spacing: -0.048em;
}
.body { display: flex; flex-direction: column; gap: 10px; padding: 15.500px 14.500px 25.500px; }
.sec {
  box-sizing: border-box;
  height: 34.200px;
  border: 1px solid #eee;
  background: #f7f7f7;
  padding-left: 9.500px;
  line-height: 32px;
}
.sec i {
  display: inline-block;
  width: 18.300px;
  height: 18px;
  margin-left: 5px;
  border-radius: 9px;
  background: #dcdcdc;
  color: #a0a0a0;
  font-size: 10px;
  font-style: normal;
  line-height: 18px;
  text-align: center;
}
.tree { margin-left: 15px; border-left: 1px solid #eee; }
.tree li { padding-left: 20px; line-height: 18.200px; background: linear-gradient(#eee, #eee) no-repeat 0 10px / 15px 1px; }
.tree > li { padding-top: 5px; padding-bottom: 5px; background-position: 0 15px; }
.tree > li + li, .tree li li + li { margin-top: 6px; }
.tree ul { margin: 10px 0 10px -5px; border-left: 1px solid #eee; }
.tools { display: flex; justify-content: space-between; }
.acts { display: flex; gap: 2px; height: 18px; color: #999; }
.acts svg { width: 18px; height: 18px; fill: currentColor; }
.acts.cut { clip-path: inset(6px 0 0 0); }
.card footer {
  display: flex;
  justify-content: center;
  padding: 9.500px 0 9.700px;
  border-top: 1px solid #eee;
  background: #f7f7f7;
}

.foot { display: flex; justify-content: space-between; margin: 89.500px 0 0 -2px; color: #50575e; }

/* floating widget */
.float {
  position: absolute;
  left: 1768px;
  top: 99px;
  width: 57px;
  height: 38px;
  box-sizing: border-box;
  display: flex;
  align-items: center;
  padding-left: 3.400px;
  border-radius: 19px;
  background: #fff;
  box-shadow: 0 4px 12px rgba(0, 0, 0, .15);
}
.badge { width: 32px; height: 32px; }
.grip { width: 8px; height: 12px; margin-left: 5px; }

/* soft shadow of the panel parked off the right edge */
.edge i {
  position: absolute;
  right: 0;
  width: 11px;
  height: 573px;
  background: linear-gradient(90deg, transparent, rgba(0, 0, 0, .08));
  -webkit-mask-image: linear-gradient(#000 96%, transparent);
  mask-image: linear-gradient(#000 96%, transparent);
}
.edge .e1 { top: 90px; height: 680px; -webkit-mask-image: linear-gradient(transparent, #000 6%, #000 96%, transparent); mask-image: linear-gradient(transparent, #000 6%, #000 96%, transparent); }
.edge .e2 { top: 848px; }
.edge .e3 { top: 1495px; }
.edge .e4 { top: 2143px; }
.edge .e5 { top: 2792px; }
.edge .e6 { top: 3397px; }
```
